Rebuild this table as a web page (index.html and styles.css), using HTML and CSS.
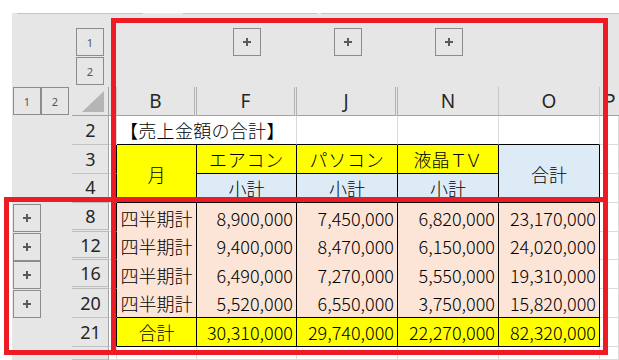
FILE: index.html
```html
<!DOCTYPE html>
<html lang="ja">
<head>
<meta charset="utf-8">
<title>売上金額の合計</title>
<link rel="stylesheet" href="styles.css">
</head>
<body>
<div class="sheet">
  <div class="topline"><span class="seg s1"></span><span class="seg s2"></span><span class="seg s3"></span></div>
  <div class="grid">
    <!-- outline row -->
    <div class="oc"></div>
    <div class="oc lvv"><span class="btn">1</span><span class="btn">2</span></div>
    <div class="oc"></div>
    <div class="oc"></div>
    <div class="oc cp"><span class="btn"><svg width="8" height="8" viewBox="0 0 8 8"><path d="M3 0h2v8H3zM0 3h8v2H0z" fill="#5a5a5a"/></svg></span></div>
    <div class="oc cp"><span class="btn"><svg width="8" height="8" viewBox="0 0 8 8"><path d="M3 0h2v8H3zM0 3h8v2H0z" fill="#5a5a5a"/></svg></span></div>
    <div class="oc cp"><span class="btn"><svg width="8" height="8" viewBox="0 0 8 8"><path d="M3 0h2v8H3zM0 3h8v2H0z" fill="#5a5a5a"/></svg></span></div>
    <div class="oc"></div>
    <div class="oc"></div>

    <!-- column headers -->
    <div class="lvh"><span class="btn">1</span><span class="btn">2</span></div>
    <div class="corner"><div class="tri"></div></div>
    <div class="ch a"></div>
    <div class="ch dbl">B</div>
    <div class="ch dbl">F</div>
    <div class="ch dbl">J</div>
    <div class="ch">N</div>
    <div class="ch">O</div>
    <div class="ch p">P</div>

    <!-- row 2 -->
    <div class="oc"></div>
    <div class="rh">2</div>
    <div class="c"></div>
    <div class="c title">【売上金額の合計】</div>
    <div class="c tb"></div>
    <div class="c tb"></div>
    <div class="c tb"></div>
    <div class="c"></div>

    <!-- row 3 -->
    <div class="oc"></div>
    <div class="rh">3</div>
    <div class="c ta"></div>
    <div class="t y ctr bb r2">月</div>
    <div class="t y ctr bb kana">エアコン</div>
    <div class="t y ctr bb kana">パソコン</div>
    <div class="t y ctr bb">液晶<span class="fw">ＴＶ</span></div>
    <div class="t bl ctr bb r2">合計</div>
    <div class="c"></div>

    <!-- row 4 -->
    <div class="oc"></div>
    <div class="rh dbl">4</div>
    <div class="c ta"></div>
    <div class="t bl ctr bb">小計</div>
    <div class="t bl ctr bb">小計</div>
    <div class="t bl ctr bb">小計</div>
    <div class="c"></div>

    <!-- row 8 -->
    <div class="ob"><span class="btn"><svg width="8" height="8" viewBox="0 0 8 8"><path d="M3 0h2v8H3zM0 3h8v2H0z" fill="#5a5a5a"/></svg></span></div>
    <div class="rh dbl">8</div>
    <div class="c ta"></div>
    <div class="t pe ctr">四半期計</div>
    <div class="t pe num">8,900,000</div>
    <div class="t pe num">7,450,000</div>
    <div class="t pe num">6,820,000</div>
    <div class="t pe num">23,170,000</div>
    <div class="c"></div>

    <!-- row 12 -->
    <div class="ob"><span class="btn"><svg width="8" height="8" viewBox="0 0 8 8"><path d="M3 0h2v8H3zM0 3h8v2H0z" fill="#5a5a5a"/></svg></span></div>
    <div class="rh dbl">12</div>
    <div class="c ta"></div>
    <div class="t pe ctr">四半期計</div>
    <div class="t pe num">9,400,000</div>
    <div class="t pe num">8,470,000</div>
    <div class="t pe num">6,150,000</div>
    <div class="t pe num">24,020,000</div>
    <div class="c"></div>

    <!-- row 16 -->
    <div class="ob"><span class="btn"><svg width="8" height="8" viewBox="0 0 8 8"><path d="M3 0h2v8H3zM0 3h8v2H0z" fill="#5a5a5a"/></svg></span></div>
    <div class="rh dbl">16</div>
    <div class="c ta"></div>
    <div class="t pe ctr">四半期計</div>
    <div class="t pe num">6,490,000</div>
    <div class="t pe num">7,270,000</div>
    <div class="t pe num">5,550,000</div>
    <div class="t pe num">19,310,000</div>
    <div class="c"></div>

    <!-- row 20 -->
    <div class="ob"><span class="btn"><svg width="8" height="8" viewBox="0 0 8 8"><path d="M3 0h2v8H3zM0 3h8v2H0z" fill="#5a5a5a"/></svg></span></div>
    <div class="rh">20</div>
    <div class="c ta"></div>
    <div class="t pe ctr bb">四半期計</div>
    <div class="t pe num bb">5,520,000</div>
    <div class="t pe num bb">6,550,000</div>
    <div class="t pe num bb">3,750,000</div>
    <div class="t pe num bb">15,820,000</div>
    <div class="c"></div>

    <!-- row 21 -->
    <div class="oc"></div>
    <div class="rh">21</div>
    <div class="c ta"></div>
    <div class="t y ctr bb">合計</div>
    <div class="t y num bb">30,310,000</div>
    <div class="t y num bb">29,740,000</div>
    <div class="t y num bb">22,270,000</div>
    <div class="t y num bb">82,320,000</div>
    <div class="c"></div>

    <!-- rest -->
    <div class="oc"></div>
    <div class="rh"></div>
    <div class="c"></div>
    <div class="c"></div>
    <div class="c"></div>
    <div class="c"></div>
    <div class="c"></div>
    <div class="c"></div>
    <div class="c"></div>
  </div>
</div>
<div class="mark mark-cols"></div>
<div class="mark mark-rows"></div>
</body>
</html>
```

FILE: styles.css
```css
* { box-sizing: border-box; }
html, body { margin: 0; padding: 0; background: #fff; }
body {
  width: 619px;
  height: 360px;
  overflow: hidden;
  position: relative;
  font-family: "Noto Sans CJK JP", "Noto Sans", sans-serif;
  font-weight: 300;
  color: #000;
}
.sheet {
  margin: 13px 0 0 12px;
  width: 607px;
  height: 347px;
  background: #e6e6e6;
  overflow: hidden;
}
.topline { display: flex; height: 1px; }
.seg { height: 1px; background: #c4c4c4; }
.s1 { margin-left: 5px; width: 126px; }
.s2 { margin-left: 40px; width: 134px; }
.s3 { margin-left: 4px; flex: 1; }

.grid {
  display: grid;
  grid-template-columns: 60px 37px 8px 80px 100px 101px 101px 101px 19px;
  grid-template-rows: 73px 29px 29px 29px 29px 29px 28px 29px 29px 29px 13px;
}

/* outline buttons */
.btn {
  width: 28px;
  height: 28px;
  border: 1px solid #8c8c8c;
  display: flex;
  align-items: center;
  justify-content: center;
  font-family: "Noto Sans", sans-serif;
  font-weight: 400;
  font-size: 11px;
  color: #555;
  line-height: 1;
}
.lvv { display: flex; flex-direction: column; gap: 1px; padding: 14px 0 0 4px; }
.cp { display: flex; justify-content: center; align-items: flex-start; padding-top: 14px; }
.lvh { display: flex; align-items: flex-start; padding-left: 1px; }
.ob { display: flex; align-items: flex-start; padding: 1px 0 0 1px; }

/* headers */
.corner {
  display: flex;
  justify-content: flex-end;
  align-items: flex-end;
  padding: 0 4px 3px 0;
  border-right: 1px solid #a3a3a3;
  border-bottom: 1px solid #a3a3a3;
}
.tri {
  width: 22px;
  height: 21px;
  background: #b5b5b5;
  clip-path: polygon(100% 0, 100% 100%, 0 100%);
}
.ch {
  display: flex;
  align-items: center;
  justify-content: center;
  font-family: "Noto Sans", sans-serif;
  font-weight: 400;
  font-size: 19px;
  color: #262626;
  line-height: 1;
  border-bottom: 1px solid #a3a3a3;
  border-right: 1px solid #c6c6c6;
  overflow: hidden;
  padding-top: 1px;
}
.ch.dbl { border-right: 3px double #b3b3b3; }
.ch.p { justify-content: flex-start; padding-left: 4px; border-right: 0; }

.rh {
  display: flex;
  align-items: center;
  justify-content: center;
  font-family: "Noto Sans", sans-serif;
  font-weight: 400;
  font-size: 18px;
  color: #262626;
  line-height: 1;
  border-right: 1px solid #a3a3a3;
  border-bottom: 1px solid #c2c2c2;
  padding-left: 1px;
}
.rh.dbl { border-bottom: 3px double #bdbdbd; }

/* cells */
.c {
  background: #fff;
  border-right: 1px solid #dadada;
  border-bottom: 1px solid #dadada;
}
.c.ta { border-right-color: #000; }
.c.tb { border-bottom-color: #000; }
.title {
  grid-column: span 2;
  border-bottom-color: #000;
  display: flex;
  align-items: center;
  padding-left: 3px;
  font-size: 18px;
  letter-spacing: 0.3px;
  line-height: 1;
  white-space: nowrap;
}

.t {
  display: flex;
  align-items: center;
  font-size: 18px;
  line-height: 1;
  white-space: nowrap;
  border-right: 1px solid #000;
}
.ctr { justify-content: center; }
.num { justify-content: flex-end; padding-right: 3px; }
.bb { border-bottom: 1px solid #000; }
.r2 { grid-row: span 2; }
.kana { letter-spacing: 0.7px; }
.fw { letter-spacing: -3px; margin-right: 3px; }
.y { background: #ffff00; }
.bl { background: #ddebf7; }
.pe { background: #fce4d6; }

/* red annotation frames */
.mark {
  position: absolute;
  border: 5px solid #ed1c24;
  pointer-events: none;
}
.mark-cols { left: 111px; top: 18px; width: 497px; height: 337px; }
.mark-rows { left: 4px; top: 197px; width: 604px; height: 158px; }
```
